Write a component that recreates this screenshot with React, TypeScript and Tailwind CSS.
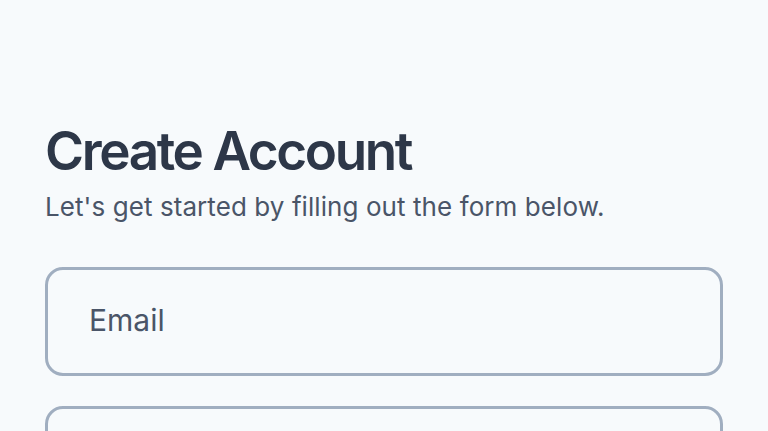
export default function App() {
  return (
    <div className="min-h-screen bg-[#f7fafc] px-[45px] pt-[119px] font-['Inter',sans-serif]">
      <h1 className="text-[53px] font-semibold leading-[64px] tracking-[-0.045em] text-[#2d3748]">Create Account</h1>
      <p className="mt-[6px] text-[26px] leading-[36px] tracking-[0.003em] text-[#4a5568]">
        Let's get started by filling out the form below.
      </p>
      <div className="mt-[42px] flex flex-col gap-[30px]">
        <input
          type="email"
          placeholder="Email"
          className="h-[109px] w-full rounded-[18px] border-[3px] border-[#a0aec0] bg-transparent px-[41px] pb-[4px] text-[30px] text-[#4a5568] outline-none placeholder:text-[#4a5568]"
        />
        <input
          type="password"
          placeholder="Password"
          className="h-[109px] w-full rounded-[18px] border-[3px] border-[#a0aec0] bg-transparent px-[41px] pb-[4px] text-[30px] text-[#4a5568] outline-none placeholder:text-[#4a5568]"
        />
      </div>
    </div>
  )
}
